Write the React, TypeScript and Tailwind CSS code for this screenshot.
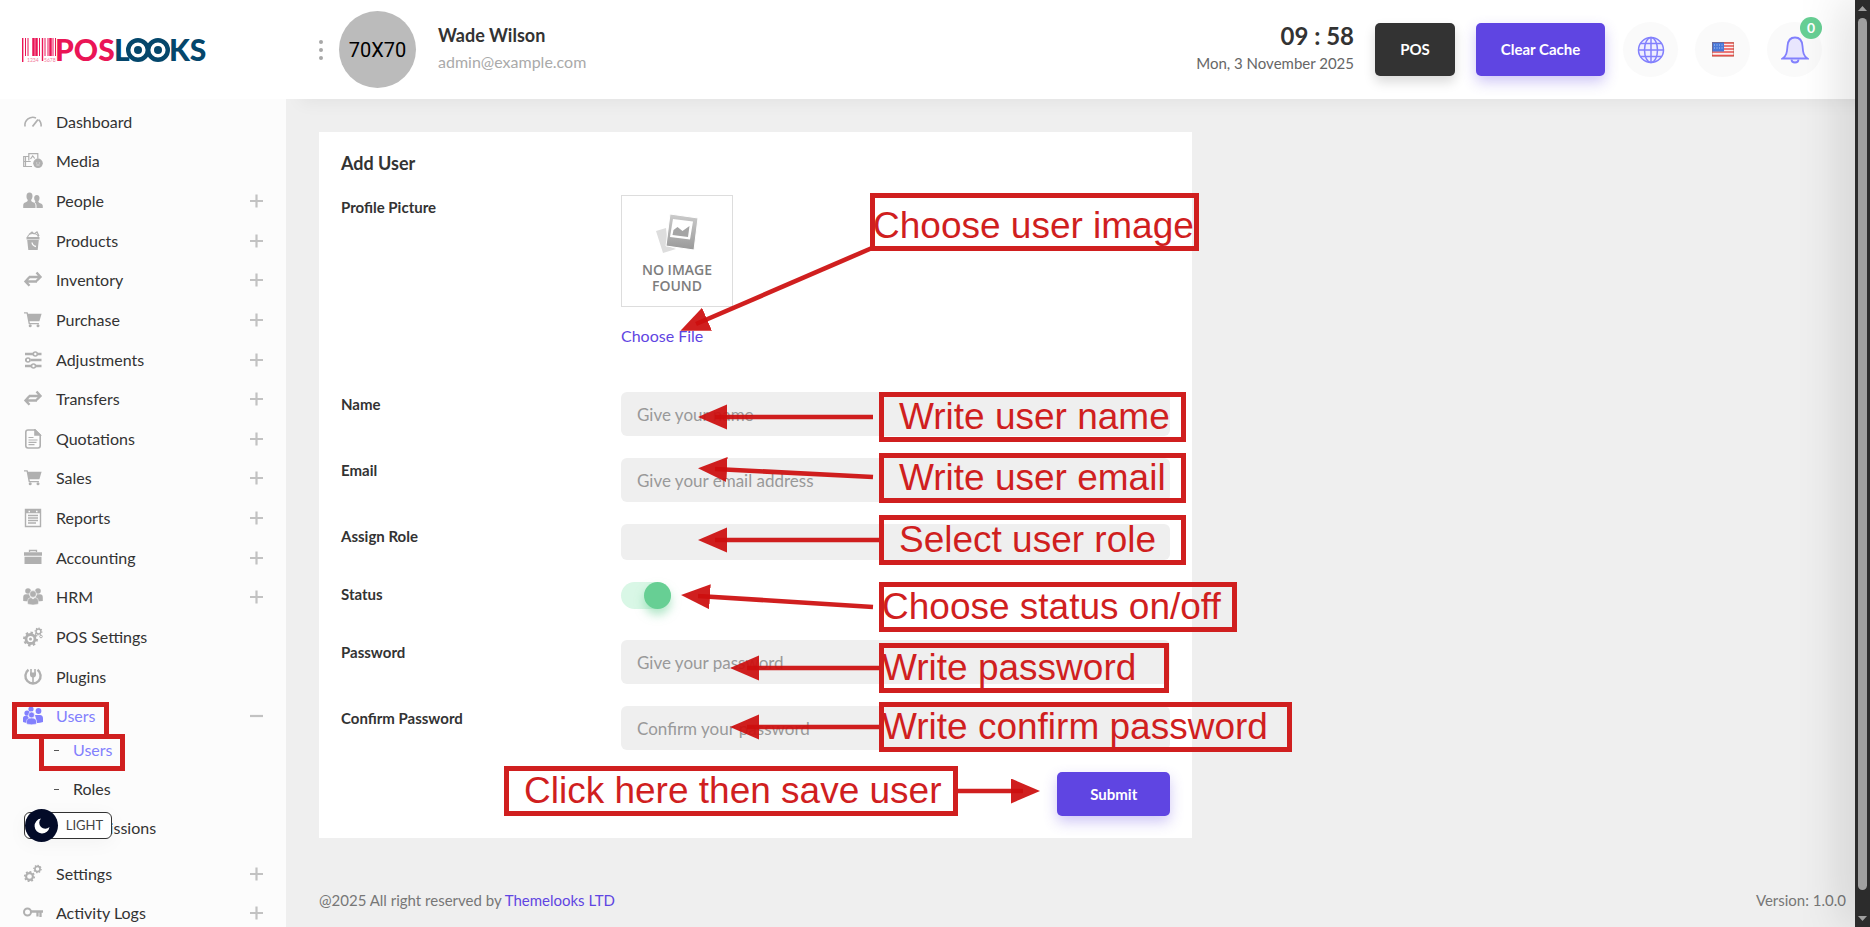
import type { ReactNode } from "react";

const icon = "w-5 h-5 shrink-0";

const Gear = ({ x, y, r }: { x: number; y: number; r: number }) => (
  <g fill="none" stroke="currentColor">
    <circle cx={x} cy={y} r={r} strokeWidth={r * 0.62} />
    <circle cx={x} cy={y} r={r * 1.4} strokeWidth={r * 0.5} pathLength={16} strokeDasharray="1 1" />
  </g>
);

const DashboardIcon = () => (
  <svg viewBox="0 0 20 20" className={icon} fill="none" stroke="currentColor" strokeWidth="1.6">
    <path d="M2 14.5a8 8 0 0 1 11-8.6M15.5 7.6a8 8 0 0 1 2.6 6.9" />
    <path d="M9.5 14.5L15 7.5" strokeWidth="1.8" />
  </svg>
);

const MediaIcon = () => (
  <svg viewBox="0 0 20 20" className={icon} fill="none" stroke="currentColor" strokeWidth="1.2">
    <path d="M9 15.5H.7V5.5H6M2.5 5.5v10M.7 10.5h7" />
    <path d="M5.8 9.5V2.7h9v5" />
    <path d="M7.5 8l2.2-3 2 2.5" />
    <circle cx="15" cy="12.3" r="4.8" fill="currentColor" stroke="none" />
    <path d="M13 12h1.3M15.8 12h1.3M13.4 14h3.2" stroke="#fcfcfc" strokeWidth=".6" />
  </svg>
);

const PeopleIcon = () => (
  <svg viewBox="0 0 20 20" className={icon} fill="currentColor">
    <path d="M6.5 1.5c2 0 3.2 1.5 3 3.8-.1 1.7-.7 2.8-1.3 3.5-.2 1.5.3 1.9 1.8 2.5 2 .8 2.5 1.6 2.5 3.5V17H.2v-2.2c0-1.9.6-2.7 2.6-3.5 1.5-.6 2-1 1.9-2.5C4 8.1 3.5 7 3.5 5.3c-.1-2.3 1-3.8 3-3.8z" />
    <path d="M13.8 4c1.9 0 2.9 1.4 2.7 3.2-.1 1.5-.5 2.3-1.1 2.9-.1 1.2.3 1.5 1.8 2.1 2 .8 2.6 1.4 2.6 3V17h-6.3v-2c0-1.9-.6-2.9-2-3.7.6-.4.9-.7.8-1.4-.6-.6-1-1.3-1.1-2.7C11 5.400 12 4 13.800 4z" />
  </svg>
);

const ProductsIcon = () => (
  <svg viewBox="0 0 20 20" className={icon}>
    <path d="M4.5 7C4.5 1 15.5 1 15.5 7M6 3.5L9 1l2 2 3-2 2 4" fill="none" stroke="currentColor" strokeWidth="1.2" />
    <path d="M3.5 6h13v2.600h-13zM4.200 9h11.600L14.700 19H5.300z" fill="currentColor" />
    <path d="M9 11.500c.3 2 1.500 3.500 4 4" fill="none" stroke="#fcfcfc" strokeWidth="1.3" />
  </svg>
);

const SwapIcon = () => (
  <svg viewBox="0 0 20 20" className={icon} fill="none" stroke="currentColor" strokeWidth="2.4">
    <path d="M6 7h11M13.500 2.500L17.500 7l-4 4M14 11.500H3M6.500 7L2.500 11.500l4 4.300" />
  </svg>
);

const CartIcon = () => (
  <svg viewBox="0 0 20 20" className={icon} fill="currentColor">
    <path d="M1 2.300h3.600l.5 1.500H18.600L16.400 11.300H6.500l.4 1.600h9v1.300H5.700L3.600 3.600H1z" />
    <circle cx="7.200" cy="15.800" r="1.5" />
    <circle cx="15" cy="15.800" r="1.5" />
  </svg>
);

const SlidersIcon = () => (
  <svg viewBox="0 0 20 20" className={icon} fill="none" stroke="currentColor" strokeWidth="2.6">
    <path d="M2 4h8M15 4h3.500M7.500 10h11M2 10h1M2 16h6M13 16h5.500" />
    <g strokeWidth="1.6">
      <circle cx="12.300" cy="4" r="2" />
      <circle cx="5" cy="10" r="2" />
      <circle cx="10.500" cy="16" r="2" />
    </g>
  </svg>
);

const FileIcon = () => (
  <svg viewBox="0 0 20 20" className={icon} fill="none" stroke="currentColor" strokeWidth="1.6">
    <path d="M12 1H5Q2.800 1 2.800 3.200v13.600Q2.800 19 5 19h10q2.200 0 2.200-2.200V6z" />
    <path d="M12 1v5h5z" fill="currentColor" />
    <path d="M5.500 8.500h5M5.500 11h9M5.500 13.300h8M5.500 15.700h6" strokeWidth="1.2" />
  </svg>
);

const ReportIcon = () => (
  <svg viewBox="0 0 20 20" className={icon} fill="none" stroke="currentColor" strokeWidth="1.4">
    <path d="M2.500 1.500h15v17h-15zM5 7.500h10M5 10h10M5 12.500h10M5 15h8" />
    <path d="M2.500 3.500h15" strokeWidth="3.5" />
    <path d="M5.500 3.500h1.500M13 3.500h1.500" stroke="#fcfcfc" />
  </svg>
);

const BriefcaseIcon = () => (
  <svg viewBox="0 0 20 20" className={icon} fill="currentColor">
    <path d="M6.500 4V2.500h7V4" fill="none" stroke="currentColor" strokeWidth="1.3" />
    <path d="M1 4.200h18v3.600H1zM1.500 8.700h17V16h-17z" />
  </svg>
);

const GroupIcon = () => (
  <svg viewBox="0 0 20 20" className={icon} fill="currentColor">
    <circle cx="5" cy="4" r="2.8" />
    <circle cx="15" cy="4" r="2.8" />
    <path d="M.2 14V10.500Q.2 7.300 3 7.300h3l2 5-2 2.200zM19.800 14V10.500q0-3.200-2.800-3.200h-3l-2 5 2 2.200z" />
    <circle cx="10" cy="7" r="3.4" stroke="#fcfcfc" strokeWidth=".6" />
    <path d="M4.500 17v-2.800q0-3.400 3.500-3.700l2 1.500 2-1.500q3.500.3 3.500 3.700V17q-5.500 2-11 0z" stroke="#fcfcfc" strokeWidth=".5" />
  </svg>
);

const UserGroupIcon = () => (
  <svg viewBox="0 0 20 20" className={icon} fill="currentColor">
    <circle cx="8" cy="3" r="2.6" />
    <circle cx="4" cy="7" r="2.6" />
    <circle cx="15.500" cy="5" r="2.9" />
    <path d="M0 16v-4q0-2.500 4-2.500l3 4V17q-4 .3-7-1zM12 9h5q3 0 3 3.500V16q-4 1.300-6 1z" />
    <circle cx="8.500" cy="9" r="3" stroke="#fcfcfc" strokeWidth=".6" />
    <path d="M3.500 18v-2.500q0-3.500 5-3.500t5 3.500V18q-5 1.500-10 0z" stroke="#fcfcfc" strokeWidth=".5" />
  </svg>
);

const GearsIcon = () => (
  <svg viewBox="0 0 20 20" className={icon}>
    <Gear x={7.5} y={12} r={4.5} />
    <circle cx="7.500" cy="12" r="1.5" fill="currentColor" />
    <Gear x={15.5} y={4.5} r={2.4} />
    <circle cx="18" cy="9.500" r="1.3" fill="none" stroke="currentColor" />
  </svg>
);

const GearPairIcon = () => (
  <svg viewBox="0 0 20 20" className={icon}>
    <Gear x={6.5} y={12.5} r={3.4} />
    <Gear x={14.5} y={5} r={2.6} />
  </svg>
);

const PluginIcon = () => (
  <svg viewBox="0 0 20 20" className={icon} fill="none" stroke="currentColor" strokeWidth="2.4">
    <path d="M5.500 2.800a7.600 7.600 0 1 0 9 0" />
    <path d="M7 5.500h6v2q0 3-3 3t-3-3z" fill="currentColor" stroke="none" />
    <path d="M8 2v4M12 2v4M10 9v7" strokeWidth="1.6" />
  </svg>
);

const KeyIcon = () => (
  <svg viewBox="0 0 20 20" className={icon} fill="none" stroke="currentColor" strokeWidth="2">
    <circle cx="4.500" cy="9" r="3.5" />
    <path d="M8 8.500h12M17.500 9v5M14.500 13.500V9" strokeWidth="2.3" />
  </svg>
);

type NavItem = { label: string; Icon: () => ReactNode; sign?: "plus" | "minus"; active?: boolean };

const mainNav: NavItem[] = [
  { label: "Dashboard", Icon: DashboardIcon },
  { label: "Media", Icon: MediaIcon },
  { label: "People", Icon: PeopleIcon, sign: "plus" },
  { label: "Products", Icon: ProductsIcon, sign: "plus" },
  { label: "Inventory", Icon: SwapIcon, sign: "plus" },
  { label: "Purchase", Icon: CartIcon, sign: "plus" },
  { label: "Adjustments", Icon: SlidersIcon, sign: "plus" },
  { label: "Transfers", Icon: SwapIcon, sign: "plus" },
  { label: "Quotations", Icon: FileIcon, sign: "plus" },
  { label: "Sales", Icon: CartIcon, sign: "plus" },
  { label: "Reports", Icon: ReportIcon, sign: "plus" },
  { label: "Accounting", Icon: BriefcaseIcon, sign: "plus" },
  { label: "HRM", Icon: GroupIcon, sign: "plus" },
  { label: "POS Settings", Icon: GearsIcon },
  { label: "Plugins", Icon: PluginIcon },
  { label: "Users", Icon: UserGroupIcon, sign: "minus", active: true },
];

const bottomNav: NavItem[] = [
  { label: "Settings", Icon: GearPairIcon, sign: "plus" },
  { label: "Activity Logs", Icon: KeyIcon, sign: "plus" },
];

const NavRow = ({ label, Icon, sign, active }: NavItem) => (
  <a href="#" className={`flex items-center ${active ? "text-[#8280fd]" : "text-[#333]"}`}>
    <span className={active ? "text-[#8280fd]" : "text-[#b0b0b0]"}>
      <Icon />
    </span>
    <span className="ml-[13px] flex-1 leading-6">{label}</span>
    {sign && (
      <svg viewBox="0 0 14 14" className="w-3.5 h-3.5" stroke="#c2c2c2" strokeWidth="2.2">
        <path d={sign === "plus" ? "M0 7h13M6.500 .5v13" : "M0 7h13"} />
      </svg>
    )}
  </a>
);

const Logo = () => (
  <svg viewBox="0 -8 188 44" className="h-11 w-[188px]" role="img" aria-label="POSLOOKS">
    <path d="M.7 2v24M20.500 2v23" stroke="#ea1556" strokeWidth="1.4" />
    <path d="M3.500 2v18M6 2v18M17.500 2v18M23 2v18M26 2v18M31 2v18M33.500 2v18" stroke="#ea1556" />
    <path d="M11.500 2v18M14.500 2v18M28.500 2v18" stroke="#ea1556" strokeWidth="2.5" />
    <g fontSize="5" fill="#ea1556" opacity=".6" fontFamily="Lato, sans-serif">
      <text x="5" y="25.500">1234</text>
      <text x="22" y="25.500">5678</text>
    </g>
    <g fontSize="30" fontWeight="900" fontFamily="Lato, sans-serif">
      <text x="33" y="25" fill="#ea1556">POS</text>
      <text x="92" y="25" fill="#04466b">L</text>
      <text x="147" y="25" fill="#04466b">KS</text>
    </g>
    <g fill="none" stroke="#04466b" strokeWidth="4.4">
      <circle cx="116" cy="14" r="9.8" />
      <circle cx="136" cy="14" r="9.8" />
    </g>
    <circle cx="116" cy="14" r="4" fill="#04466b" />
    <circle cx="136" cy="14" r="4" fill="#04466b" />
  </svg>
);

const Header = () => (
  <header className="relative z-10 flex h-[99px] shrink-0 items-center bg-white shadow-[300px_4px_16px_rgba(0,0,0,0.05)]">
    <div className="w-[286px] shrink-0 pl-[22px]">
      <Logo />
    </div>
    <button className="ml-[33px] flex flex-col gap-1" aria-label="Menu">
      <span className="h-1 w-1 rounded-full bg-[#a8a8a8]" />
      <span className="h-1 w-1 rounded-full bg-[#a8a8a8]" />
      <span className="h-1 w-1 rounded-full bg-[#a8a8a8]" />
    </button>
    <div className="ml-4 flex h-[77px] w-[77px] items-center justify-center rounded-full bg-[#bbb] font-[Roboto,sans-serif] text-xl text-black">
      70X70
    </div>
    <div className="ml-[22px] pb-1">
      <div className="text-lg leading-7 font-bold">Wade Wilson</div>
      <div className="text-base leading-[26px] text-[#aaa]">admin@example.com</div>
    </div>
    <div className="ml-auto pb-0.5 text-right">
      <div className="text-2xl leading-7 font-bold">09 : 58</div>
      <div className="text-[15px] leading-[26px] text-[#666]">Mon, 3 November 2025</div>
    </div>
    <button className="ml-[21px] h-[53px] w-20 rounded-[5px] bg-[#333] text-[15px] font-bold text-white shadow-[0_6px_12px_rgba(0,0,0,0.15)]">
      POS
    </button>
    <button className="ml-[21px] h-[53px] w-[129px] rounded-[5px] bg-[#5f45e2] text-[15px] font-bold text-white shadow-[0_6px_14px_rgba(95,69,226,0.3)]">
      Clear Cache
    </button>
    <div className="mr-[33px] ml-[18px] flex gap-[17px]">
      <button className="flex h-[55px] w-[55px] items-center justify-center rounded-full bg-[#fafafa]" aria-label="Website">
        <svg viewBox="0 0 28 28" className="h-7 w-7" fill="none" stroke="#8280fd" strokeWidth="1.5">
          <circle cx="14" cy="14" r="12.5" fill="#eeedfe" />
          <ellipse cx="14" cy="14" rx="6.5" ry="12.5" />
          <path d="M14 1.500v25M1.500 14h25M3.500 7.500h21M3.500 20.500h21" />
        </svg>
      </button>
      <button className="flex h-[55px] w-[55px] items-center justify-center rounded-full bg-[#fafafa]" aria-label="Language">
        <svg viewBox="0 0 22 15" className="h-[15px] w-[22px]">
          <path d="M0 0h22v15H0z" fill="#fbeeee" />
          <path d="M0 1h22M0 4h22M0 7h22M0 10h22M0 13.500h22" stroke="#e8504d" strokeWidth="1.6" />
          <path d="M0 0h12v9.500H0z" fill="#4a78d8" />
          <path d="M2 3h9M2 6h9" stroke="#b9cdf5" strokeDasharray="1 1.5" />
          <path d="M.5.5h21v14H.5z" fill="none" stroke="#a0553c" opacity=".4" />
        </svg>
      </button>
      <button className="relative flex h-[55px] w-[55px] items-center justify-center rounded-full bg-[#fafafa]" aria-label="Notifications">
        <svg viewBox="0 0 28 28" className="h-7 w-7" fill="#e8e6fe" stroke="#8280fd" strokeWidth="1.8">
          <path d="M10.500 23.500q0 3 3.500 3t3.500-3" />
          <path d="M1.500 22.500c4-2.500 4.500-6 5-12.500.4-5.500 3.500-8.500 7.500-8.500s7.100 3 7.500 8.500c.5 6.500 1 10 5 12.500z" />
        </svg>
        <span className="absolute -top-[5px] right-0 flex h-[22px] w-[22px] items-center justify-center rounded-full bg-[#67cf94] text-sm leading-none font-bold text-white">
          0
        </span>
      </button>
    </div>
  </header>
);

const Sidebar = () => (
  <nav className="w-[286px] shrink-0 overflow-hidden bg-[#fcfcfc] pt-[3px] pr-[22px] pl-[23px] text-base">
    <div className="grid h-[634px] grid-rows-[repeat(16,1fr)]">
      {mainNav.map((item) => (
        <NavRow key={item.label} {...item} />
      ))}
    </div>
    <div className="flex flex-col gap-[15px] pt-0.5 pb-3.5 pl-[31px]">
      {["Users", "Roles", "Permissions"].map((label) => (
        <a key={label} href="#" className={`flex items-center leading-6 ${label === "Users" ? "text-[#8280fd]" : "text-[#333]"}`}>
          <span className="mr-[14px] h-px w-[5px] bg-[#555]" />
          {label}
        </a>
      ))}
    </div>
    <div className="grid grid-rows-[repeat(2,39px)]">
      {bottomNav.map((item) => (
        <NavRow key={item.label} {...item} />
      ))}
    </div>
  </nav>
);

const NoImage = () => (
  <div className="flex h-28 w-28 flex-col items-center border border-[#ddd] bg-white pt-[17px]">
    <svg viewBox="0 0 44 42" className="h-[42px] w-11">
      <defs>
        <linearGradient id="photo" x1="0" y1="0" x2="0" y2="1">
          <stop offset="0" stopColor="#ccc" />
          <stop offset="1" stopColor="#999" />
        </linearGradient>
      </defs>
      <path d="M1 18l10-3 2 18 8 3-13 4z" fill="#ddd" />
      <path d="M15 1l28 4-4 32-28-4z" fill="url(#photo)" stroke="#fff" />
      <path d="M18 6l20 2.500-3 18-20-2.500z" fill="#fff" />
      <path d="M17.500 22l1-5 4-3 5 4 7-5-1.500 11z" fill="#a5a5a5" />
    </svg>
    <span className="mt-[7px] text-center font-['Open_Sans',sans-serif] text-sm leading-4 font-semibold text-[#7d7d7d]">
      NO IMAGE
      <br />
      FOUND
    </span>
  </div>
);

const inputClass =
  "w-full rounded-md bg-[#efefef] px-4 text-[17px] text-[#333] placeholder:text-[#999] focus:outline-none";

const Field = ({ id, label, children }: { id: string; label: string; children: ReactNode }) => (
  <div className="flex items-start">
    <label htmlFor={id} className="w-[280px] shrink-0 text-[15px] leading-6 font-bold">
      {label}
    </label>
    <div className="flex-1">{children}</div>
  </div>
);

const UserForm = () => (
  <form className="w-7/12 bg-white p-[22px]">
    <h4 className="pb-[23px] text-lg leading-[18px] font-bold">Add User</h4>
    <div className="flex flex-col gap-[22px]">
      <Field id="picture" label="Profile Picture">
        <div className="pb-[22px]">
          <NoImage />
          <label htmlFor="picture" className="mt-[17px] inline-block cursor-pointer text-base leading-6 text-[#5f45e2]">
            Choose File
          </label>
          <input id="picture" type="file" className="sr-only" />
        </div>
      </Field>
      <Field id="name" label="Name">
        <input id="name" className={`${inputClass} h-11`} placeholder="Give your name" />
      </Field>
      <Field id="email" label="Email">
        <input id="email" type="email" className={`${inputClass} h-11`} placeholder="Give your email address" />
      </Field>
      <Field id="role" label="Assign Role">
        <select id="role" className={`${inputClass} h-9 appearance-none`} />
      </Field>
      <Field id="status" label="Status">
        <div className="pb-[9px]">
          <span className="relative flex h-[27px] w-[50px] rounded-full bg-[#d9f7e6]">
            <input id="status" type="checkbox" defaultChecked className="peer absolute inset-0 cursor-pointer opacity-0" />
            <span className="pointer-events-none h-[27px] w-[27px] rounded-full bg-[#67cf94] shadow-[0_6px_10px_rgba(103,207,148,0.5)] peer-checked:ml-auto" />
          </span>
        </div>
      </Field>
      <Field id="password" label="Password">
        <input id="password" type="password" className={`${inputClass} h-11`} placeholder="Give your password" />
      </Field>
      <Field id="confirm" label="Confirm Password">
        <input id="confirm" type="password" className={`${inputClass} h-11`} placeholder="Confirm your password" />
      </Field>
      <button
        type="submit"
        className="h-11 w-[113px] self-end rounded-[5px] bg-[#5f45e2] text-[15px] font-bold text-white shadow-[0_6px_14px_rgba(95,69,226,0.3)]"
      >
        Submit
      </button>
    </div>
  </form>
);

const ThemeToggle = () => (
  <button className="absolute top-[812px] left-6 flex h-[27px] w-22 items-center rounded-md border border-[#333] bg-white text-[13px] text-[#444] shadow-[0_4px_20px_rgba(0,0,0,0.04)]">
    <span className="flex h-[33px] w-[33px] shrink-0 items-center justify-center rounded-full bg-[#030b28]">
      <svg viewBox="0 0 16 16" className="h-4 w-4" fill="#fff">
        <path d="M7 .5A7.500 7.500 0 1 0 15.500 9 5.500 5.500 0 0 1 7 .5z" />
      </svg>
    </span>
    <span className="flex-1 text-center">LIGHT</span>
  </button>
);

// tutorial callouts drawn over the form
const arrows = [
  "M872 248L696 324",
  "M873 417H715",
  "M873 477L715 469",
  "M881 540H715",
  "M873 607L698 596",
  "M881 668H747",
  "M881 727H747",
  "M957 791H1023",
];

const callout =
  "absolute h-[50px] whitespace-nowrap font-['Liberation_Sans',sans-serif] text-[37px] leading-[50px] text-[#d01f1f] outline-5 -outline-offset-5 outline-[#d01f1f]";

const Callouts = () => (
  <div className="pointer-events-none absolute inset-0 z-20">
    <svg className="absolute inset-0 h-full w-full" fill="none" stroke="#cc0e0e" strokeOpacity=".93" strokeWidth="4.6">
      <defs>
        <marker id="head" markerUnits="userSpaceOnUse" markerWidth="30" markerHeight="26" refX="12" refY="12.5" orient="auto">
          <path d="M0 0L29 12.500L0 25z" fill="#cc0e0e" fillOpacity=".93" stroke="none" />
        </marker>
      </defs>
      {arrows.map((d) => (
        <path key={d} d={d} markerEnd="url(#head)" />
      ))}
    </svg>
    <div className={`${callout} top-[193px] left-[870px] h-[58px] w-[329px] pt-2 pl-[3px]`}>Choose user image</div>
    <div className={`${callout} top-[392px] left-[879px] w-[307px] pl-5`}>Write user name</div>
    <div className={`${callout} top-[453px] left-[879px] w-[307px] pl-5`}>Write user email</div>
    <div className={`${callout} top-[515px] left-[879px] w-[307px] pl-5`}>Select user role</div>
    <div className={`${callout} top-[582px] left-[879px] w-[358px] pl-[3px]`}>Choose status on/off</div>
    <div className={`${callout} top-[643px] left-[879px] w-[290px] pl-[3px]`}>Write password</div>
    <div className={`${callout} top-[702px] left-[879px] w-[413px] pl-[3px]`}>Write confirm password</div>
    <div className={`${callout} top-[766px] left-[504px] w-[454px] pl-5`}>Click here then save user</div>
    <div className="absolute top-[702px] left-3 h-[37px] w-[97px] border-5 border-[#d01f1f]" />
    <div className="absolute top-[734px] left-[39px] h-[37px] w-[86px] border-5 border-[#d01f1f]" />
  </div>
);

const App = () => {
  return (
    <div className="relative flex h-screen overflow-hidden bg-[#efefef] font-[Lato,sans-serif] text-[#333]">
      <div className="flex min-w-0 flex-1 flex-col">
        <Header />
        <div className="flex min-h-0 flex-1">
          <Sidebar />
          <main className="flex flex-1 flex-col pt-[33px] pr-[39px] pl-[33px]">
            <UserForm />
            <footer className="-mr-[30px] mt-auto flex justify-between pb-[15px] text-[15px] leading-6 text-[#777]">
              <p>
                @2025 All right reserved by{" "}
                <a href="#" className="text-[#5f45e2]">
                  Themelooks LTD
                </a>
              </p>
              <p>Version: 1.0.0</p>
            </footer>
          </main>
        </div>
      </div>
      <div className="z-10 flex w-[15px] shrink-0 flex-col items-center justify-between bg-[#2c2c2c] py-1.5 shadow-[0_0_50px_rgba(0,0,0,0.35)]">
        <svg viewBox="0 0 9 5" className="h-[5px] w-[9px]" fill="#a0a0a0">
          <path d="M0 5L4.500 0 9 5z" />
        </svg>
        <span className="mt-[7px] mb-[26px] w-[9px] flex-1 rounded-full bg-[#9f9f9f]" />
        <svg viewBox="0 0 9 5" className="h-[5px] w-[9px]" fill="#a0a0a0">
          <path d="M0 0L4.500 5 9 0z" />
        </svg>
      </div>
      <ThemeToggle />
      <Callouts />
    </div>
  );
};

export default App;
